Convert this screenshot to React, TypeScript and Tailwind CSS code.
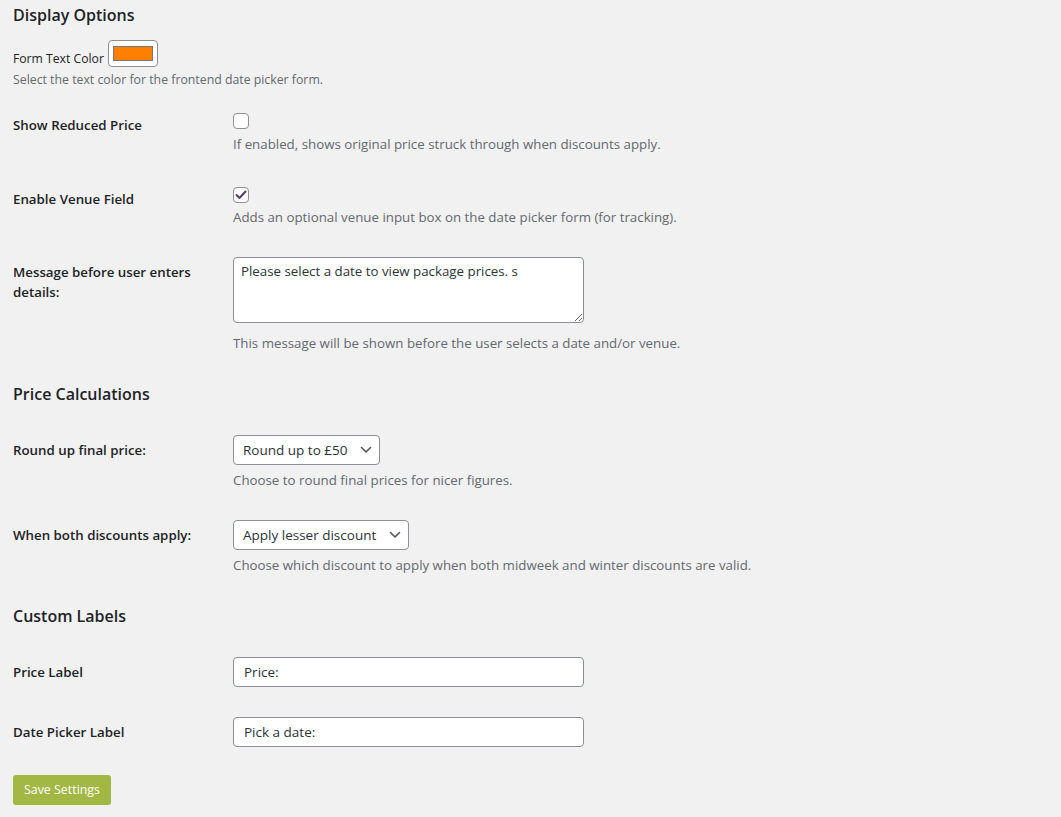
import { useState } from "react";

function Chevron() {
  return (
    <svg width="12" height="8" viewBox="0 0 12 8" fill="none" className="shrink-0">
      <path d="M1.5 1.5 L6 6 L10.5 1.5" stroke="#50575e" strokeWidth="1.6" strokeLinecap="round" strokeLinejoin="round" />
    </svg>
  );
}

function Row({
  label,
  thPad = "pt-[35px]",
  tdPad = "pt-[30px]",
  children,
}: {
  label: string;
  thPad?: string;
  tdPad?: string;
  children: React.ReactNode;
}) {
  return (
    <div className="flex items-start">
      <div className={`w-[220px] shrink-0 pr-[10px] ${thPad}`}>
        <div className="text-[13.3px] leading-[20px] font-semibold text-[#1d2327]">{label}</div>
      </div>
      <div className={`flex-1 ${tdPad}`}>{children}</div>
    </div>
  );
}

function Desc({ children, className = "" }: { children: React.ReactNode; className?: string }) {
  return <p className={`text-[13.3px] leading-[20px] text-[#646970] ${className}`}>{children}</p>;
}

function Checkbox({ checked, onChange }: { checked: boolean; onChange: () => void }) {
  return (
    <button
      type="button"
      onClick={onChange}
      className="w-[16px] h-[16px] rounded-[4px] border border-[#8c8f94] bg-white flex items-center justify-center"
    >
      {checked && (
        <svg width="12" height="10" viewBox="0 0 12 10" fill="none">
          <path d="M1.5 5 L4.5 8 L10.5 1.5" stroke="#523f6d" strokeWidth="2" strokeLinecap="round" strokeLinejoin="round" />
        </svg>
      )}
    </button>
  );
}

export default function App() {
  const [reduced, setReduced] = useState(false);
  const [venue, setVenue] = useState(true);

  return (
    <div
      className="min-h-[817px] bg-[#f1f1f1] pl-[13px] pr-4 pt-[4px] pb-4 text-[#1d2327]"
      style={{ fontFamily: '"Open Sans", "Noto Sans", sans-serif' }}
    >
      <h2 className="text-[16px] leading-[22px] font-semibold">Display Options</h2>

      <div className="mt-[14px] flex items-end gap-[4px]">
        <span className="text-[12.2px] leading-[20px] mb-[-2px]">Form Text Color</span>
        <button
          type="button"
          className="w-[50px] h-[27px] rounded-[4px] border border-[#8c8f94] bg-white flex items-center justify-center"
        >
          <span className="block w-[40px] h-[15px] bg-[#ff7f00] border border-[#777]" />
        </button>
      </div>
      <p className="mt-[3px] text-[12.3px] leading-[20px] text-[#646970]">
        Select the text color for the frontend date picker form.
      </p>

      <Row label="Show Reduced Price" thPad="pt-[25px]" tdPad="pt-[23px]">
        <Checkbox checked={reduced} onChange={() => setReduced(!reduced)} />
        <Desc className="mt-[5px]">If enabled, shows original price struck through when discounts apply.</Desc>
      </Row>

      <Row label="Enable Venue Field" thPad="pt-[35px]" tdPad="pt-[33px]">
        <Checkbox checked={venue} onChange={() => setVenue(!venue)} />
        <Desc className="mt-[4px]">Adds an optional venue input box on the date picker form (for tracking).</Desc>
      </Row>

      <Row label="Message before user enters details:">
        <textarea
          defaultValue="Please select a date to view package prices. s"
          className="block w-[351px] h-[66px] rounded-[4px] border border-[#8c8f94] bg-white px-[7px] py-[3px] text-[13.3px] leading-[20px] text-[#2c3338] outline-none"
        />
        <Desc className="mt-[10px]">This message will be shown before the user selects a date and/or venue.</Desc>
      </Row>

      <h2 className="mt-[30px] text-[16px] leading-[22px] font-semibold">Price Calculations</h2>

      <Row label="Round up final price:">
        <div className="w-[147px] h-[30px] rounded-[4px] border border-[#8c8f94] bg-white pl-[9px] pr-[7px] flex items-center justify-between text-[13.5px] text-[#2c3338]">
          <span>Round up to £50</span>
          <Chevron />
        </div>
        <Desc className="mt-[5px]">Choose to round final prices for nicer figures.</Desc>
      </Row>

      <Row label="When both discounts apply:">
        <div className="w-[176px] h-[30px] rounded-[4px] border border-[#8c8f94] bg-white pl-[9px] pr-[7px] flex items-center justify-between text-[13.5px] text-[#2c3338]">
          <span>Apply lesser discount</span>
          <Chevron />
        </div>
        <Desc className="mt-[5px]">Choose which discount to apply when both midweek and winter discounts are valid.</Desc>
      </Row>

      <h2 className="mt-[30px] text-[16px] leading-[22px] font-semibold">Custom Labels</h2>

      <Row label="Price Label">
        <input
          defaultValue="Price:"
          className="block w-[351px] h-[30px] rounded-[4px] border border-[#8c8f94] bg-white px-[10px] text-[13.5px] text-[#2c3338] outline-none"
        />
      </Row>

      <Row label="Date Picker Label">
        <input
          defaultValue="Pick a date:"
          className="block w-[351px] h-[30px] rounded-[4px] border border-[#8c8f94] bg-white px-[10px] text-[13.5px] text-[#2c3338] outline-none"
        />
      </Row>

      <button
        type="button"
        className="mt-[28px] h-[30px] w-[98px] rounded-[3px] bg-[#a3b745] text-white text-[12.4px] leading-[30px]"
      >
        Save Settings
      </button>
    </div>
  );
}
